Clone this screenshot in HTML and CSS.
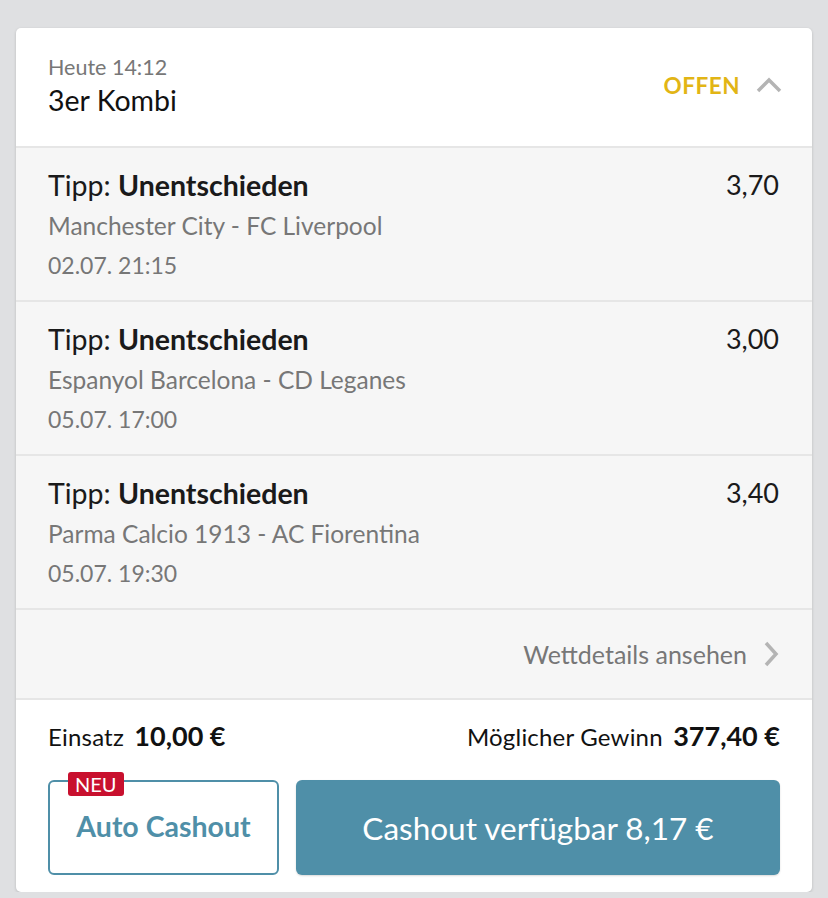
FILE: index.html
```html
<!DOCTYPE html>
<html>
<head>
  <link rel="stylesheet" href="styles.css">
</head>
<body>
  <div class="card">
    <div class="head">
      <div class="head-info">
        <div class="when">Heute 14:12</div>
        <div class="type">3er Kombi</div>
      </div>
      <div class="status">OFFEN</div>
      <svg class="chev-up" width="26" height="16" viewBox="0 0 26 16">
        <polyline points="2,14 13,3 24,14" fill="none" stroke="#b4b4b4" stroke-width="3.5"/>
      </svg>
    </div>

    <div class="pick">
      <div class="pick-main">
        <div class="tip">Tipp: <b>Unentschieden</b></div>
        <div class="match">Manchester City - FC Liverpool</div>
        <div class="date">02.07. 21:15</div>
      </div>
      <div class="odds">3,70</div>
    </div>
    <div class="pick">
      <div class="pick-main">
        <div class="tip">Tipp: <b>Unentschieden</b></div>
        <div class="match">Espanyol Barcelona - CD Leganes</div>
        <div class="date">05.07. 17:00</div>
      </div>
      <div class="odds">3,00</div>
    </div>
    <div class="pick">
      <div class="pick-main">
        <div class="tip">Tipp: <b>Unentschieden</b></div>
        <div class="match">Parma Calcio 1913 - AC Fiorentina</div>
        <div class="date">05.07. 19:30</div>
      </div>
      <div class="odds">3,40</div>
    </div>

    <div class="details">
      <span>Wettdetails ansehen</span>
      <svg class="chev-right" width="16" height="26" viewBox="0 0 16 26">
        <polyline points="3,2 13,13 3,24" fill="none" stroke="#b4b4b4" stroke-width="3.5"/>
      </svg>
    </div>

    <div class="foot">
      <div class="amounts">
        <div>Einsatz <b>10,00 €</b></div>
        <div>Möglicher Gewinn <b>377,40 €</b></div>
      </div>
      <div class="actions">
        <button class="auto-btn">Auto Cashout<span class="badge">NEU</span></button>
        <button class="cash-btn">Cashout verfügbar 8,17 €</button>
      </div>
    </div>
  </div>
</body>
</html>
```

FILE: styles.css
```css
body {
  margin: 0;
  padding: 28px 16px 0;
  background: #dfe0e2;
  font-family: Lato, "Liberation Sans", sans-serif;
  color: #1a1a1a;
}
.card {
  background: #fff;
  border-radius: 5px;
  box-shadow: 0 1px 3px rgba(0,0,0,0.18);
  overflow: hidden;
}
.head {
  display: flex;
  align-items: center;
  height: 118px;
  padding: 0 30px 0 32px;
  border-bottom: 2px solid #e6e6e6;
}
.head-info {
  flex: 1;
  margin-top: -3px;
}
.when {
  font-size: 21.5px;
  line-height: 28px;
  color: #777;
}
.type {
  font-size: 28.5px;
  line-height: 38px;
  color: #111;
}
.status {
  color: #e2b515;
  font-size: 22.5px;
  font-weight: bold;
  letter-spacing: 0.5px;
  margin-right: 16px;
  margin-top: -4px;
}
.chev-up {
  margin-top: -4px;
}
.pick {
  display: flex;
  background: #f6f6f6;
  height: 152px;
  padding: 0 33px 0 32px;
  border-bottom: 2px solid #e6e6e6;
  box-sizing: content-box;
}
.pick-main {
  flex: 1;
  padding-top: 18px;
}
.tip {
  font-size: 28.5px;
  line-height: 38px;
  color: #1a1a1a;
}
.tip b {
  font-weight: bold;
}
.match {
  margin-top: 2px;
  font-size: 24.5px;
  line-height: 40px;
  color: #777;
}
.date {
  font-size: 23px;
  line-height: 38px;
  color: #777;
}
.odds {
  padding-top: 18px;
  font-size: 27px;
  line-height: 38px;
}
.details {
  display: flex;
  justify-content: flex-end;
  align-items: center;
  height: 88px;
  background: #f6f6f6;
  padding-right: 33px;
  border-bottom: 2px solid #e6e6e6;
  font-size: 25px;
  color: #777;
}
.chev-right {
  margin-left: 16px;
}
.foot {
  padding: 18px 32px 17px;
}
.amounts {
  display: flex;
  justify-content: space-between;
  align-items: baseline;
  font-size: 24px;
  line-height: 36px;
  letter-spacing: 0.2px;
  color: #111;
}
.amounts b {
  font-size: 27px;
  margin-left: 4px;
  letter-spacing: 0;
}
.actions {
  display: flex;
  gap: 17px;
  margin-top: 25px;
}
button {
  font-family: Lato, "Liberation Sans", sans-serif;
  border-radius: 6px;
  height: 95px;
  cursor: pointer;
}
.auto-btn {
  position: relative;
  width: 231px;
  background: #fff;
  border: 2px solid #4f8fa8;
  color: #4f8fa8;
  font-size: 28.5px;
  font-weight: bold;
  padding: 0 0 4px;
}
.badge {
  position: absolute;
  left: 18px;
  top: -10px;
  background: #c8102e;
  color: #fff;
  font-size: 20px;
  font-weight: normal;
  line-height: 24px;
  padding: 0 7px;
  border-radius: 3px;
}
.cash-btn {
  flex: 1;
  background: #4f8fa8;
  border: none;
  color: #fff;
  font-size: 31.5px;
  box-shadow: 0 1px 2px rgba(0,0,0,0.15);
}
```
